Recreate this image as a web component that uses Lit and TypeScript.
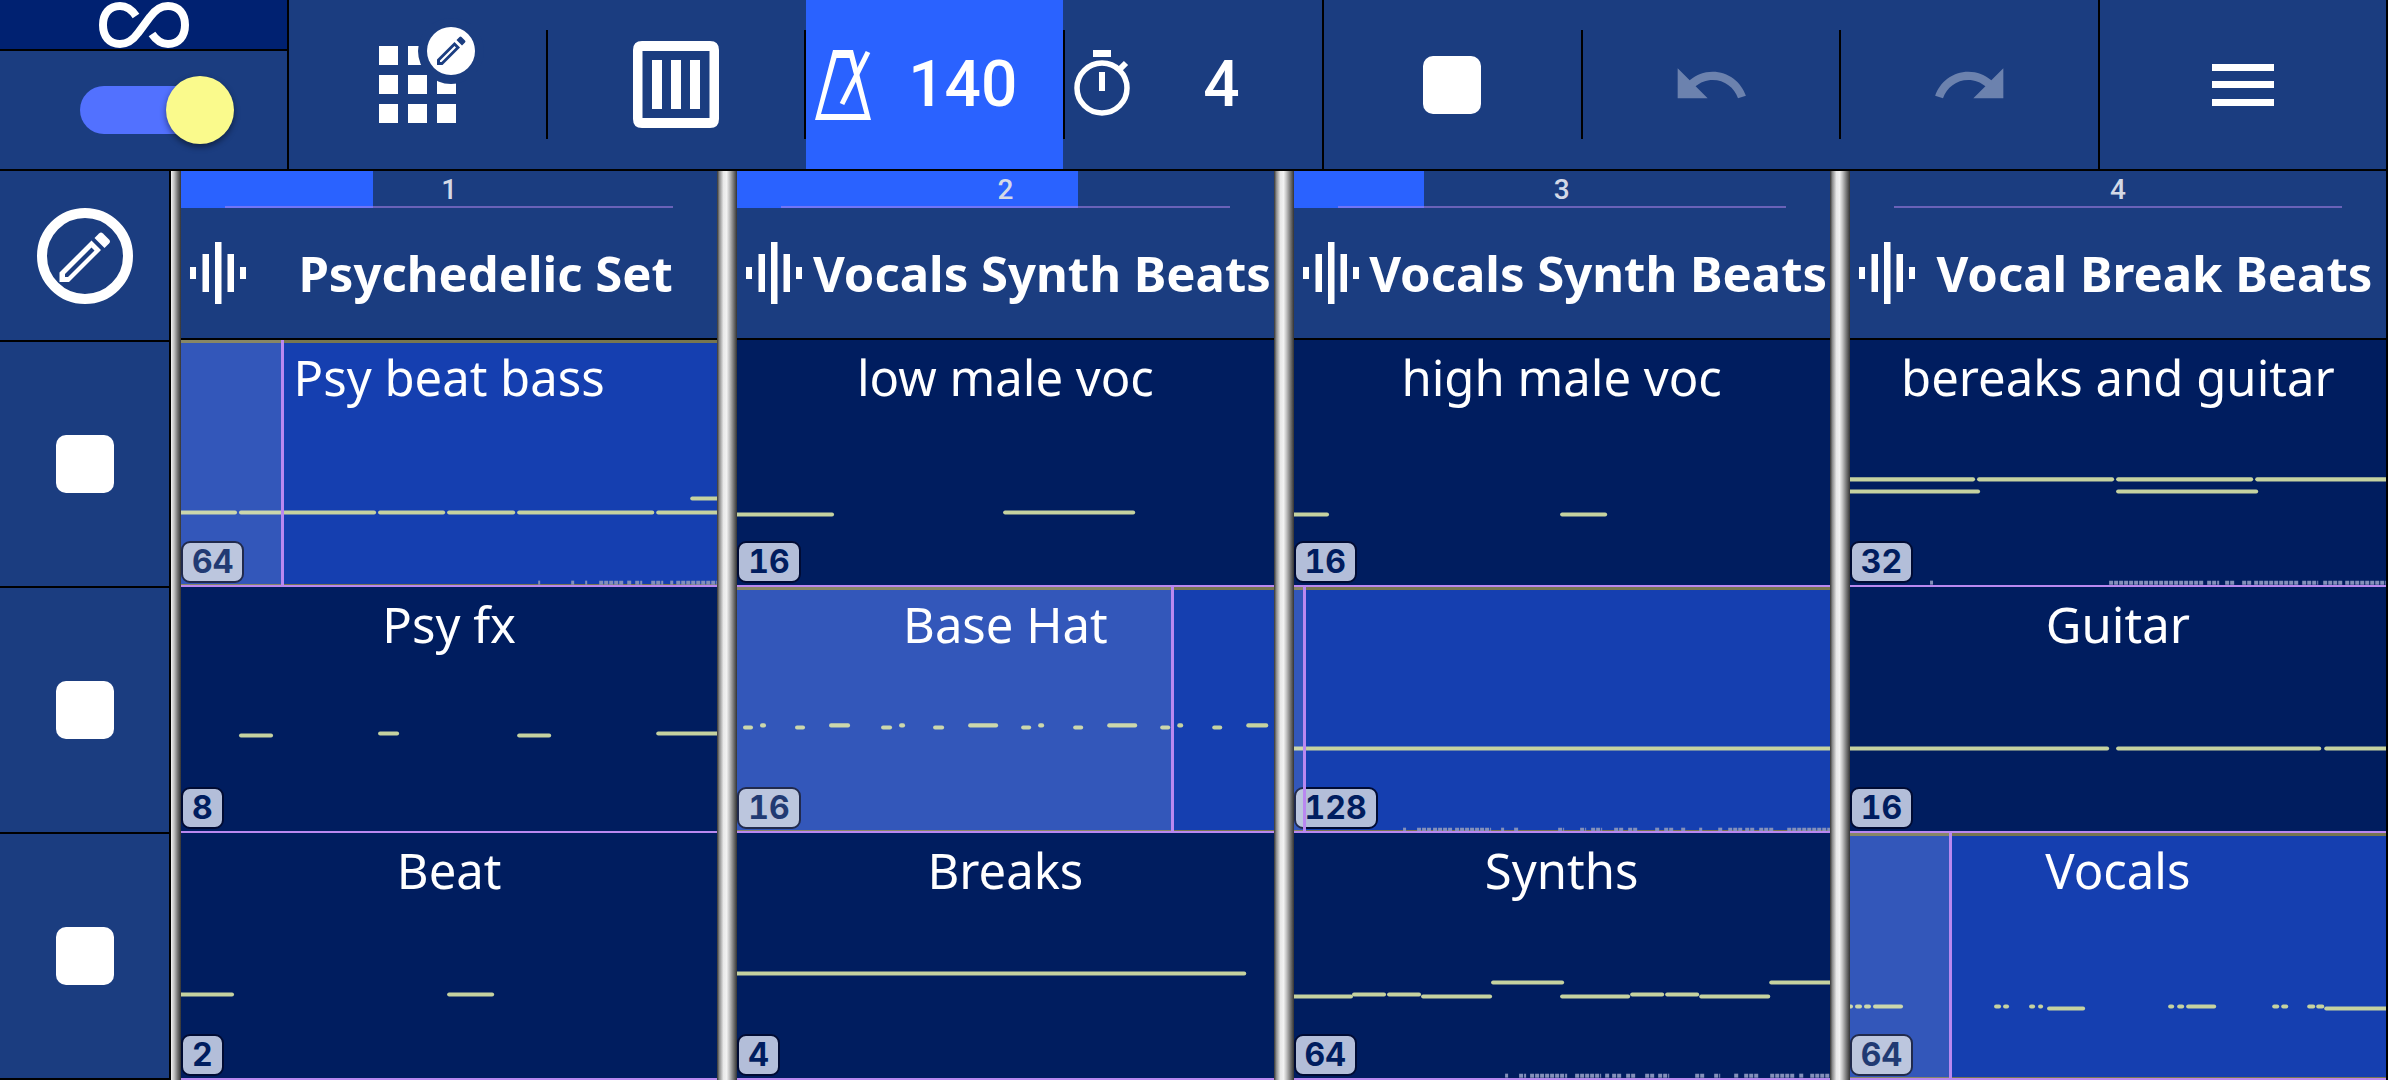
import { LitElement, html, svg, css, nothing } from "lit";
import { customElement, property } from "lit/decorators.js";
import { classMap } from "lit/directives/class-map.js";

/** A note bar: start x, end x, y, in the clip's 536 x 244 preview space. */
type Note = [number, number, number];

interface Clip {
  name: string;
  length: number;
  notes: Note[];
  /** Ranges of velocity ticks along the lower edge. */
  ticks?: [number, number][];
  /** Loop position in percent; set only while the clip plays. */
  position?: number;
}

interface Track {
  title: string;
  progress: number;
  clips: Clip[];
}

const TRACKS: Track[] = [
  {
    title: "Psychedelic Set",
    progress: 35.8,
    clips: [
      {
        name: "Psy beat bass",
        length: 64,
        position: 19.2,
        notes: [
          [-4, 56, 173], [58, 195, 173], [197, 264, 173], [266, 334, 173],
          [336, 473, 173], [475, 542, 173], [509, 542, 159],
        ],
        ticks: [
          [357, 359], [390, 393], [404, 406], [418, 443], [446, 450],
          [454, 461], [470, 482], [489, 492], [495, 536],
        ],
      },
      {
        name: "Psy fx",
        length: 8,
        notes: [[58, 92, 149], [197, 218, 147], [336, 370, 149], [475, 542, 147]],
      },
      {
        name: "Beat",
        length: 2,
        notes: [[-4, 53, 162], [266, 313, 162]],
      },
    ],
  },
  {
    title: "Vocals Synth Beats",
    progress: 63.6,
    clips: [
      {
        name: "low male voc",
        length: 16,
        notes: [[-4, 97, 175], [266, 398, 173]],
      },
      {
        name: "Base Hat",
        length: 16,
        position: 81.5,
        notes: [
          [6, 16, 141], [23, 29, 139], [58, 68, 141], [92, 113, 139],
          [144, 155, 141], [162, 168, 139], [196, 207, 141], [231, 261, 139],
          [284, 294, 141], [301, 307, 139], [336, 346, 141], [370, 400, 139],
          [423, 433, 141], [440, 446, 139], [475, 485, 141], [509, 531, 139],
        ],
      },
      {
        name: "Breaks",
        length: 4,
        notes: [[-4, 509, 141]],
      },
    ],
  },
  {
    title: "Vocals Synth Beats",
    progress: 24.4,
    clips: [
      {
        name: "high male voc",
        length: 16,
        notes: [[-4, 35, 175], [266, 313, 175]],
      },
      {
        name: "",
        length: 128,
        position: 2.3,
        notes: [[-4, 542, 162]],
        ticks: [
          [109, 112], [123, 137], [139, 158], [161, 197], [207, 210],
          [220, 225], [264, 270], [286, 292], [297, 308], [320, 330],
          [334, 344], [361, 365], [370, 380], [387, 391], [405, 408],
          [424, 428], [434, 449], [451, 461], [465, 479], [493, 536],
        ],
      },
      {
        name: "Synths",
        length: 64,
        notes: [
          [-4, 59, 164], [58, 92, 162], [93, 127, 162], [127, 198, 164],
          [197, 270, 150], [266, 336, 164], [336, 370, 162], [371, 405, 162],
          [405, 476, 164], [475, 542, 150],
        ],
        ticks: [
          [211, 214], [225, 232], [236, 273], [281, 307], [311, 315],
          [318, 327], [332, 341], [351, 360], [364, 375], [401, 410],
          [420, 426], [440, 445], [450, 465], [476, 501], [505, 510], [516, 536],
        ],
      },
    ],
  },
  {
    title: "Vocal Break Beats",
    progress: 0,
    clips: [
      {
        name: "bereaks and guitar",
        length: 32,
        notes: [
          [-4, 125, 140], [127, 264, 140], [266, 403, 140], [405, 542, 140],
          [-4, 130, 152], [266, 408, 152],
        ],
        ticks: [
          [80, 83], [259, 353], [357, 369], [375, 385], [392, 401],
          [404, 448], [452, 468], [473, 493], [495, 536],
        ],
      },
      {
        name: "Guitar",
        length: 16,
        notes: [[-4, 259, 162], [266, 471, 162], [474, 542, 162]],
      },
      {
        name: "Vocals",
        length: 64,
        position: 19.1,
        notes: [
          [-4, 3, 174], [5, 12, 174], [14, 21, 174], [23, 53, 174],
          [144, 151, 174], [153, 159, 174], [179, 185, 174], [188, 193, 174],
          [197, 235, 176], [318, 324, 174], [327, 334, 174], [336, 366, 174],
          [422, 429, 174], [431, 438, 174], [457, 465, 174], [466, 474, 174],
          [474, 542, 176],
        ],
      },
    ],
  },
];

const infinityIcon = html`<svg width="90" height="46" viewBox="0 0 90 46" fill="none" stroke="currentColor" stroke-width="8" aria-hidden="true">
  <path d="M37 14C33 8 28 4 21 4C10 4 4 12 4 23C4 34 10 42 21 42C29 42 34 38 39 31L51 15C56 8 61 4 69 4C80 4 86 12 86 23C86 34 80 42 69 42C62 42 57 38 53 32"/>
</svg>`;

const gridEditIcon = html`<svg class="spill" width="77" height="77" viewBox="0 0 77 77" aria-hidden="true">
  <g fill="#fff">
    <path d="M0 0h19v19H0zM29 0h19v19H29zM0 29h19v19H0zM29 29h19v19H29zM58 29h19v19H58zM0 58h19v19H0zM29 58h19v19H29zM58 58h19v19H58z"/>
  </g>
  <circle cx="72" cy="5" r="33" fill="#1b3d80"/>
  <circle cx="72" cy="5" r="24" fill="#fff"/>
  <path fill="#1b3d80" fill-rule="evenodd" d="M58 13.500L75.500 -4L81 1.500L63.500 19H58zM61 14.500V16H62.500L77 1.500L75.500 0zM77.500 -6L80.500 -9Q81.500 -10 82.500 -9L86 -5.500Q87 -4.500 86 -3.500L83 -.5z"/>
</svg>`;

const keysIcon = html`<svg width="86" height="87" viewBox="0 0 86 87" aria-hidden="true">
  <path fill="#fff" fill-rule="evenodd" d="M9 0H77Q86 0 86 9V78Q86 87 77 87H9Q0 87 0 78V9Q0 0 9 0zM9.500 10V77H76.500V10zM19 19H29V68H19zM38 19H48V68H38zM57 19H67V68H57z"/>
</svg>`;

const metronomeIcon = html`<svg width="56" height="70" viewBox="0 0 56 70" aria-hidden="true">
  <path fill="#fff" fill-rule="evenodd" d="M18 0H38L56 70H0zM21.500 8L6 64H49.500L34.500 8z"/>
  <path d="M27 54L53 2" fill="none" stroke="#fff" stroke-width="5"/>
</svg>`;

const stopwatchIcon = html`<svg width="56" height="70" viewBox="0 0 56 70" fill="none" stroke="#fff" aria-hidden="true">
  <circle cx="28" cy="38" r="25" stroke-width="5.500"/>
  <path d="M19 3.500H37" stroke-width="7"/>
  <path d="M28 22V41" stroke-width="6"/>
  <path d="M45 20L52 13" stroke-width="6"/>
</svg>`;

const undoIcon = html`<svg width="80" height="80" viewBox="0 0 24 24" fill="currentColor" aria-hidden="true">
  <path d="M12.500 8c-2.650 0-5.050.990-6.900 2.600L2 7v9h9l-3.620-3.620c1.390-1.160 3.160-1.880 5.120-1.880 3.540 0 6.550 2.310 7.600 5.500l2.370-.780C21.080 11.030 17.150 8 12.500 8z"/>
</svg>`;

const redoIcon = html`<svg width="80" height="80" viewBox="0 0 24 24" fill="currentColor" aria-hidden="true">
  <path d="M18.400 10.600C16.550 8.990 14.150 8 11.500 8c-4.650 0-8.580 3.030-9.960 7.220L3.900 16c1.050-3.190 4.050-5.500 7.600-5.500 1.950 0 3.730.720 5.120 1.880L13 16h9V7l-3.600 3.600z"/>
</svg>`;

const menuIcon = html`<svg width="62" height="42" viewBox="0 0 62 42" fill="#fff" aria-hidden="true">
  <path d="M0 0H62V7H0zM0 17H62V24H0zM0 35H62V42H0z"/>
</svg>`;

const editIcon = html`<svg width="96" height="96" viewBox="0 0 96 96" aria-hidden="true">
  <circle cx="48" cy="48" r="43" fill="none" stroke="#fff" stroke-width="10"/>
  <path fill="#fff" fill-rule="evenodd" d="M22.500 64.500L54.500 32.500L64 42L32 74H22.500zM28 66V69H31L57.500 42.500L54.500 39.500z"/>
  <path fill="#fff" d="M57.500 30L62 25.500Q64 23.500 66 25.500L72 31.500Q74 33.500 72 35.500L67.500 40z"/>
</svg>`;

const audioIcon = html`<svg width="56" height="62" viewBox="0 0 56 62" fill="#fff" aria-hidden="true">
  <path d="M0 25H6V37H0zM12.500 12H19V50H12.500zM25 0H31.500V62H25zM37.500 12H44V50H37.500zM50 25H56V37H50z"/>
</svg>`;

@customElement("clip-cell")
class ClipCell extends LitElement {
  @property({ attribute: false }) clip!: Clip;

  static styles = css`
    :host {
      display: grid;
      min-height: 160px;
    }
    .clip {
      position: relative;
      display: flex;
      flex-direction: column;
      justify-content: space-between;
      align-items: flex-start;
      min-width: 0;
      margin: 0;
      padding: 9px 0 2px;
      overflow: hidden;
      border: 0;
      border-bottom: 2px solid #b988f0;
      background: #001d5f;
      color: #fff;
      font: 400 49px/56px "Noto Sans", sans-serif;
      text-align: center;
    }
    .playing {
      background: #153fb0;
      box-shadow: inset 0 3px #777650, inset 0 -1px #777650;
    }
    .name {
      align-self: stretch;
      min-height: 56px;
      white-space: nowrap;
    }
    .badge {
      box-sizing: border-box;
      min-width: 37px;
      padding: 0 9px;
      border: 2px solid #000b33;
      border-radius: 9px;
      background: #b3bed9;
      color: #001d5f;
      font: 700 32px/38px Inter, sans-serif;
      font-variant-numeric: tabular-nums;
    }
    .preview {
      position: absolute;
      inset: 0;
      width: 100%;
      height: 100%;
    }
    .note {
      stroke: #c5d2a0;
      stroke-width: 4;
      stroke-linecap: round;
    }
    .tick {
      stroke: #8390ba;
      stroke-width: 4;
      stroke-dasharray: 4 1;
    }
    .played {
      position: absolute;
      inset: 0 auto 0 0;
      box-sizing: border-box;
      border-right: 3px solid #b988f0;
      background: rgba(255, 255, 255, 0.13);
    }
  `;

  render() {
    const { name, length, notes, ticks = [], position } = this.clip;
    const playing = position !== undefined;
    return html`<button class=${classMap({ clip: true, playing })} type="button" aria-pressed=${playing}>
      <svg class="preview" viewBox="0 1 536 244" preserveAspectRatio="none" aria-hidden="true">
        ${notes.map(([a, b, y]) => svg`<line class="note" x1=${a + 2} x2=${b - 2} y1=${y} y2=${y}></line>`)}
        ${ticks.map(([a, b]) => svg`<line class="tick" x1=${a} x2=${b} y1="243" y2="243"></line>`)}
      </svg>
      <span class="name">${name}</span>
      <span class="badge">${length}</span>
      ${playing ? html`<span class="played" style="width:${position}%"></span>` : nothing}
    </button>`;
  }
}

@customElement("track-column")
class TrackColumn extends LitElement {
  @property({ attribute: false }) track!: Track;
  @property({ type: Number }) number = 1;

  static styles = css`
    :host {
      display: grid;
      grid-template-rows: 169px repeat(3, 1fr);
      min-width: 0;
    }
    .head {
      display: flex;
      flex-direction: column;
      box-sizing: border-box;
      min-width: 0;
      border-bottom: 2px solid #000;
      background: #1b3d80;
      color: #fff;
    }
    .bar {
      position: relative;
      height: 37px;
      color: #d3d9e6;
      font: 500 28px/37px Roboto, sans-serif;
      text-align: center;
    }
    .fill {
      position: absolute;
      inset: 0 auto 0 0;
      background: #2a62ff;
    }
    .rule {
      position: absolute;
      inset: auto 44px 0;
      height: 2px;
      background: rgba(185, 136, 240, 0.5);
    }
    .index {
      position: relative;
    }
    .title {
      display: flex;
      flex: 1;
      align-items: center;
      gap: 8px;
      min-width: 0;
      padding: 0 0 0 9px;
      border: 0;
      background: none;
      color: inherit;
      font: 700 49px/56px "Noto Sans", sans-serif;
    }
    .title svg {
      flex: none;
    }
    .label {
      display: flex;
      flex: 1;
      justify-content: center;
      min-width: 0;
      white-space: nowrap;
    }
  `;

  render() {
    const { title, progress, clips } = this.track;
    return html`
      <div class="head">
        <div class="bar">
          <span class="fill" style="width:${progress}%"></span>
          <span class="rule"></span>
          <span class="index">${this.number}</span>
        </div>
        <button class="title" type="button">${audioIcon}<span class="label">${title}</span></button>
      </div>
      ${clips.map((clip) => html`<clip-cell .clip=${clip}></clip-cell>`)}
    `;
  }
}

@customElement("app-root")
class AppRoot extends LitElement {
  static styles = css`
    :host {
      display: flex;
      flex-direction: column;
      box-sizing: border-box;
      min-height: 100vh;
      border-right: 2px solid #000;
      background: #1b3d80;
      color: #fff;
      font-family: Roboto, sans-serif;
    }
    button {
      margin: 0;
      padding: 0;
      border: 0;
      background: none;
      color: inherit;
      font: inherit;
    }
    svg {
      display: block;
      flex: none;
    }
    .spill {
      overflow: visible;
    }
    .toolbar {
      display: flex;
      height: 169px;
      border-bottom: 2px solid #000;
    }
    .loop {
      display: flex;
      flex-direction: column;
      flex: 0 0 287px;
    }
    .infinity {
      display: grid;
      place-items: center;
      height: 51px;
      border-bottom: 2px solid #000;
      background: #002171;
    }
    .switch {
      display: flex;
      flex: 1;
      align-items: center;
      padding-left: 80px;
    }
    .toggle {
      position: relative;
      width: 154px;
      height: 68px;
      margin: 0;
      appearance: none;
    }
    .toggle::before {
      content: "";
      position: absolute;
      inset: 10px 10px 10px 0;
      border-radius: 24px;
      background: #5271ff;
    }
    .toggle::after {
      content: "";
      position: absolute;
      inset: 0 0 0 auto;
      width: 68px;
      border-radius: 50%;
      background: #fafa8c;
      box-shadow: 0 3px 6px rgba(0, 0, 0, 0.45);
    }
    .sep {
      flex: none;
      width: 2px;
      background: #000;
    }
    .short {
      margin: 30px 0;
    }
    .tool {
      display: flex;
      flex: 1 1 0;
      align-items: center;
      justify-content: center;
      min-width: 0;
    }
    .tool:disabled {
      color: #6c82ae;
    }
    .menu {
      flex: 0 0 286px;
    }
    .value {
      font-size: 64px;
      font-weight: 500;
    }
    .value svg {
      margin-left: 9px;
    }
    .active {
      background: #2a62ff;
    }
    .figure {
      flex: 1;
      margin-right: 9px;
      text-align: center;
    }
    .square {
      width: 58px;
      height: 58px;
      border-radius: 10px;
      background: #fff;
    }
    .board {
      display: grid;
      flex: 1;
      grid-template-columns: 171px 10px repeat(3, minmax(0, 1fr) 20px) minmax(0, 1fr);
    }
    .side {
      display: grid;
      grid-template-rows: 171px repeat(3, 1fr);
      border-right: 2px solid #000;
    }
    .side-button {
      display: grid;
      place-items: center;
      border-bottom: 2px solid #000;
    }
    .pole {
      background: linear-gradient(90deg, #333 0%, #8c8c8c 12%, #e8e8e8 32%, #f2f2f2 48%, #c4c4c4 62%, #777 82%, #333 100%);
    }
    .edge {
      background: linear-gradient(90deg, #f2f2f2 0%, #c4c4c4 30%, #777 65%, #333 100%);
    }
  `;

  render() {
    return html`
      <header class="toolbar">
        <div class="loop">
          <button class="infinity" type="button" aria-label="Loop">${infinityIcon}</button>
          <label class="switch"><input class="toggle" type="checkbox" role="switch" aria-label="Loop on" checked /></label>
        </div>
        <span class="sep"></span>
        <button class="tool" type="button" aria-label="Edit grid">${gridEditIcon}</button>
        <span class="sep short"></span>
        <button class="tool" type="button" aria-label="Keys">${keysIcon}</button>
        <span class="sep short"></span>
        <button class="tool value active" type="button" aria-pressed="true">
          ${metronomeIcon}<span class="figure">140</span>
        </button>
        <span class="sep short"></span>
        <button class="tool value" type="button">${stopwatchIcon}<span class="figure">4</span></button>
        <span class="sep"></span>
        <button class="tool" type="button" aria-label="Stop"><span class="square"></span></button>
        <span class="sep short"></span>
        <button class="tool" type="button" aria-label="Undo" disabled>${undoIcon}</button>
        <span class="sep short"></span>
        <button class="tool" type="button" aria-label="Redo" disabled>${redoIcon}</button>
        <span class="sep"></span>
        <button class="tool menu" type="button" aria-label="Menu">${menuIcon}</button>
      </header>
      <main class="board">
        <div class="side">
          <button class="side-button" type="button" aria-label="Edit">${editIcon}</button>
          ${[1, 2, 3].map(
            (row) => html`<button class="side-button" type="button" aria-label="Stop row ${row}">
              <span class="square"></span>
            </button>`,
          )}
        </div>
        ${TRACKS.map(
          (track, i) => html`
            <div class=${i === 0 ? "edge" : "pole"}></div>
            <track-column .track=${track} .number=${i + 1}></track-column>
          `,
        )}
      </main>
    `;
  }
}
